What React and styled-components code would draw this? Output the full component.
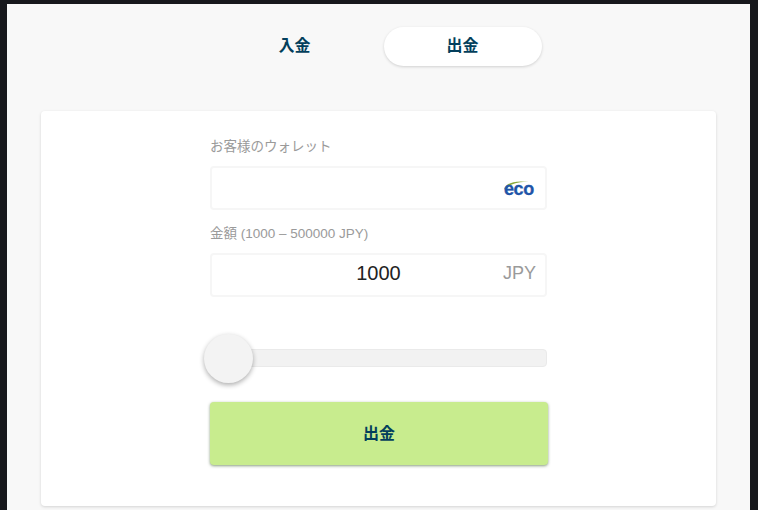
import React from "react";
import styled, { createGlobalStyle } from "styled-components";

const Global = createGlobalStyle`
  html, body { margin: 0; padding: 0; background: #17181c; overflow: hidden; }
  body { font-family: "Liberation Sans", "Noto Sans CJK JP", sans-serif; }
`;
const Page = styled.div`
  width: 758px; height: 510px; box-sizing: border-box; padding: 4px 8px 0 7px; overflow: hidden;
`;
const Panel = styled.main`
  background: #f8f8f8; height: 506px; box-sizing: border-box; padding: 23px 34px 0 34px;
`;
const Tabs = styled.nav`
  display: flex; justify-content: center; margin-bottom: 45px;
`;
const Tab = styled.button`
  width: 158px; height: 39px; margin: 0 5px; border: 0; border-radius: 20px; padding: 0 0 5px;
  background: ${p => (p.$active ? "#fff" : "transparent")};
  box-shadow: ${p => (p.$active ? "0 1px 3px rgba(0,0,0,.16)" : "none")};
  color: #033f5c; font: 700 16px "Liberation Sans", "Noto Sans CJK JP", sans-serif;
`;
const Card = styled.section`
  background: #fff; border-radius: 4px; box-shadow: 0 1px 3px rgba(0,0,0,.15);
  height: 395px; box-sizing: border-box; padding: 28px 0 0 169px;
`;
const Form = styled.div`
  width: 337px; display: flex; flex-direction: column;
`;
const Label = styled.label`
  font-size: 13.5px; line-height: 16px; color: #9a9a9a; margin-bottom: 11px;
`;
const Field = styled.div`
  height: 44px; box-sizing: border-box; border: 2px solid #f6f6f6; border-radius: 4px;
  margin-bottom: ${p => (p.$wide ? "16px" : "14px")};
  position: relative; display: flex; align-items: center; justify-content: center; background: #fff;
`;
const Value = styled.span`
  font-size: 20px; color: #222; margin: 0 0 3px 0;
`;
const Unit = styled.span`
  position: absolute; right: 9px; top: 8px; font-size: 18px; line-height: 20px; color: #9a9a9a;
`;
const Logo = styled.span`
  position: absolute; right: 10px; top: 10px; width: 32px; height: 20px; display: block;
`;
const LogoText = styled.span`
  position: absolute; left: 1px; bottom: 0; font: 700 18px/18px "Liberation Sans", sans-serif; color: #1f55a8; letter-spacing: -0.4px; -webkit-text-stroke: 0.3px #1f55a8;
`;
const Arc = styled.svg`
  position: absolute; left: 0; top: 2px;
`;
const SliderWrap = styled.div`
  position: relative; height: 18px; margin: 38px 0 35px;
`;
const Track = styled.div`
  height: 18px; background: #f2f2f2; border: 1px solid #eaeaea; box-sizing: border-box; border-radius: 4px;
`;
const Thumb = styled.div`
  position: absolute; left: -6px; top: -15px; width: 49px; height: 49px; border-radius: 50%;
  background: #f3f3f3; box-shadow: 0 2px 5px rgba(0,0,0,.32);
`;
const Submit = styled.button`
  width: 338px; height: 63px; border: 0; border-radius: 4px; background: #c8ec8e; padding: 0 0 4px;
  box-shadow: 0 1px 3px rgba(20,60,0,.5);
  color: #033f5c; font: 700 16px "Liberation Sans", "Noto Sans CJK JP", sans-serif;
`;

export default function App() {
  return (
    <Page>
      <Global />
      <Panel>
        <Tabs>
          <Tab>入金</Tab>
          <Tab $active>出金</Tab>
        </Tabs>
        <Card>
          <Form>
            <Label>お客様のウォレット</Label>
            <Field $wide>
              <Logo>
                <Arc width="28" height="10" viewBox="0 0 28 10">
                  <path d="M1 9 C3 3 12 0 26 2 C14 1.5 6 4 2.5 10 Z" fill="#8aa83a" />
                </Arc>
                <LogoText>eco</LogoText>
              </Logo>
            </Field>
            <Label>金額 (1000 – 500000 JPY)</Label>
            <Field>
              <Value>1000</Value>
              <Unit>JPY</Unit>
            </Field>
            <SliderWrap>
              <Track />
              <Thumb />
            </SliderWrap>
            <Submit>出金</Submit>
          </Form>
        </Card>
      </Panel>
    </Page>
  );
}
